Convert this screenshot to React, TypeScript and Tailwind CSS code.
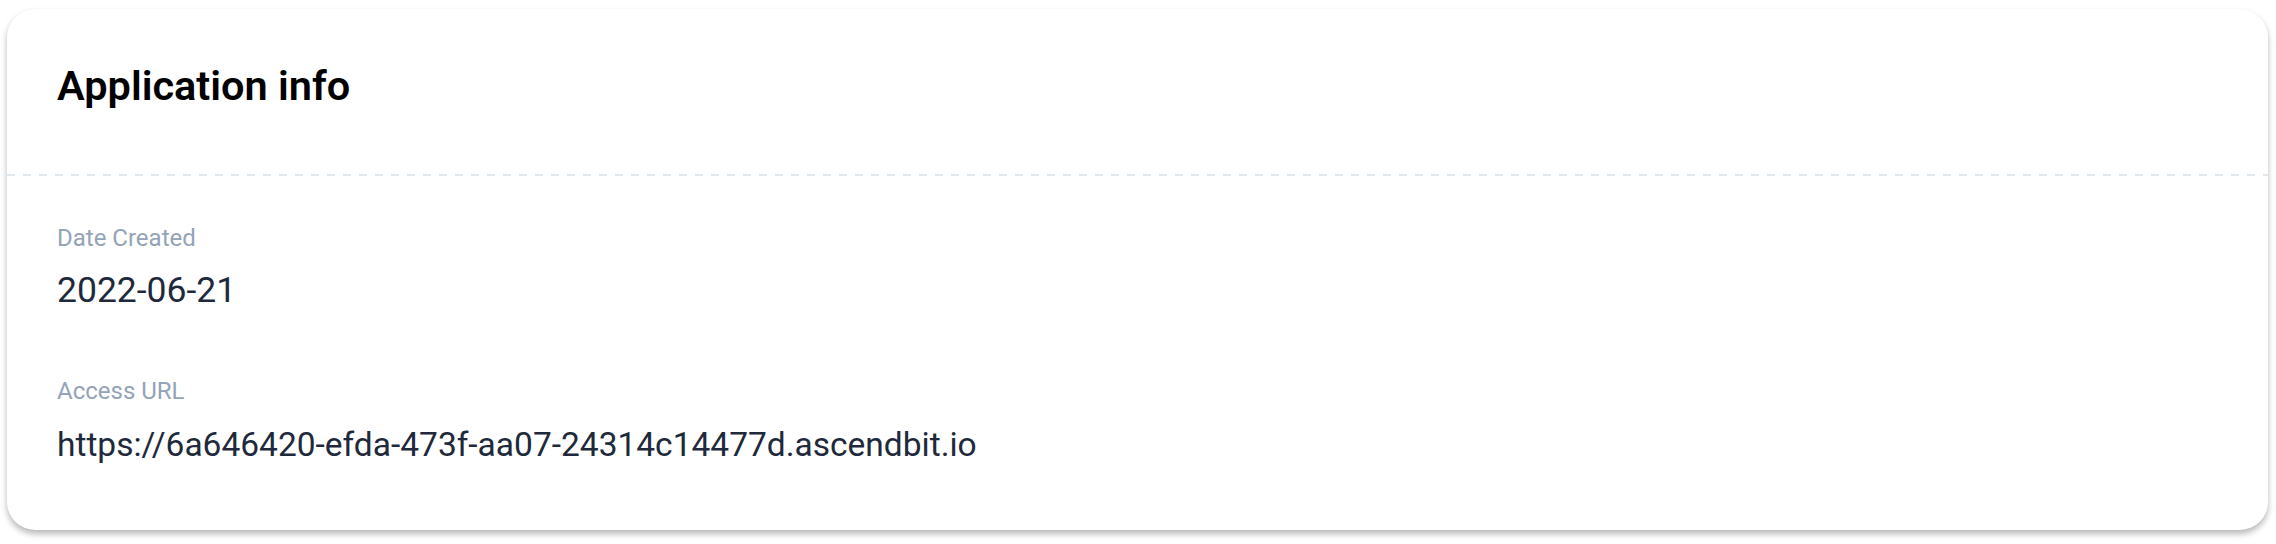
import React from "react";

export default function App() {
  return (
    <div className="w-[2276px] h-[544px] bg-white pl-[7px] pr-[8px] pt-[9px] font-['Roboto',sans-serif]">
      <div className="rounded-[28px] bg-white shadow-[0_4px_6px_rgba(0,0,0,0.28),0_0_1px_rgba(0,0,0,0.06)]">
        <div className="pl-[50px] pt-[53px] pb-[64px]">
          <h2 className="text-[41.5px] leading-[48px] font-semibold text-black">Application info</h2>
        </div>
        <div className="h-[2px] bg-[linear-gradient(to_right,#e2e8f0_50%,transparent_50%)] bg-[length:16px_2px]" />
        <div className="pl-[50px] pt-[48px] pb-[65px] flex flex-col">
          <div className="text-[24px] leading-[28px] text-[#94a3b8]">Date Created</div>
          <div className="mt-[18px] text-[35.5px] leading-[40px] text-[#1e293b]">2022-06-21</div>
          <div className="mt-[67px] text-[24px] leading-[28px] text-[#94a3b8]">Access URL</div>
          <div className="mt-[20px] text-[33.5px] leading-[40px] text-[#1e293b]">https://6a646420-efda-473f-aa07-24314c14477d.ascendbit.io</div>
        </div>
      </div>
    </div>
  );
}
